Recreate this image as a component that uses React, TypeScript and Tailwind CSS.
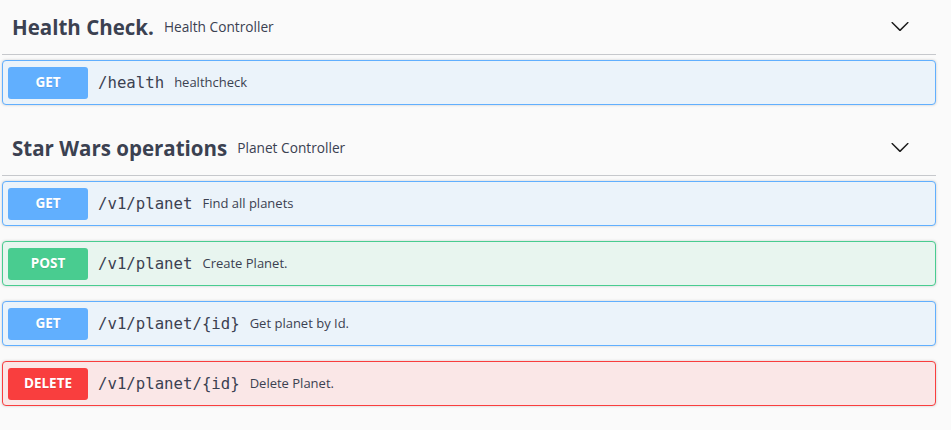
import React from 'react';

type Method = 'GET' | 'POST' | 'DELETE';

interface Operation {
  method: Method;
  path: string;
  summary: string;
}

interface Tag {
  name: string;
  description: string;
  operations: Operation[];
}

const tags: Tag[] = [
  {
    name: 'Health Check.',
    description: 'Health Controller',
    operations: [{ method: 'GET', path: '/health', summary: 'healthcheck' }],
  },
  {
    name: 'Star Wars operations',
    description: 'Planet Controller',
    operations: [
      { method: 'GET', path: '/v1/planet', summary: 'Find all planets' },
      { method: 'POST', path: '/v1/planet', summary: 'Create Planet.' },
      { method: 'GET', path: '/v1/planet/{id}', summary: 'Get planet by Id.' },
      { method: 'DELETE', path: '/v1/planet/{id}', summary: 'Delete Planet.' },
    ],
  },
];

const methodStyles: Record<Method, { block: string; badge: string }> = {
  GET: { block: 'bg-[#ebf3fa] border-[#61affe]', badge: 'bg-[#61affe]' },
  POST: { block: 'bg-[#e8f5ef] border-[#49cc90]', badge: 'bg-[#49cc90]' },
  DELETE: { block: 'bg-[#fae7e7] border-[#f93e3e]', badge: 'bg-[#f93e3e]' },
};

const Chevron = () => (
  <svg width="20" height="20" viewBox="0 0 20 20" className="fill-[#1b1b1b] -mt-[3px]">
    <path d="M17.418 6.109c.272-.268.709-.268.979 0s.271.701 0 .969l-7.908 7.83c-.27.268-.707.268-.979 0l-7.908-7.83c-.27-.268-.27-.701 0-.969.271-.268.709-.268.979 0L10 13.25l7.418-7.141z" />
  </svg>
);

const OperationRow: React.FC<{ op: Operation }> = ({ op }) => {
  const s = methodStyles[op.method];
  return (
    <div
      className={`flex items-center h-[45px] mb-[15px] border rounded-[4px] p-[5px] shadow-[0_0_3px_rgba(0,0,0,0.19)] ${s.block}`}
    >
      <span
        className={`flex items-center justify-center w-[80px] h-[32px] rounded-[3px] text-white text-[13.5px] font-bold [text-shadow:0_1px_0_rgba(0,0,0,0.1)] ${s.badge}`}
      >
        {op.method}
      </span>
      <span className="pl-[10px] pr-[10px] text-[15.7px] text-[#3b4151] font-['DejaVu_Sans_Mono',monospace]">
        {op.path}
      </span>
      <span className="text-[13px] text-[#3b4151]">{op.summary}</span>
    </div>
  );
};

export default function App() {
  return (
    <div className="min-h-screen bg-[#fafafa] font-['Open_Sans',sans-serif]">
      <div className="ml-[2px] w-[934px]">
        {tags.map((tag) => (
          <section key={tag.name} className="pb-px">
            <div className="flex items-center h-[55px] pl-[10px] pr-[26px] border-b border-[#c6c8cc]">
              <h3 className="text-[20.5px] font-bold text-[#3b4151]">{tag.name}</h3>
              <small className="pl-[10px] text-[13.7px] text-[#3b4151] flex-1">{tag.description}</small>
              <Chevron />
            </div>
            <div className="pt-[5px]">
              {tag.operations.map((op, i) => (
                <OperationRow key={i} op={op} />
              ))}
            </div>
          </section>
        ))}
      </div>
    </div>
  );
}
